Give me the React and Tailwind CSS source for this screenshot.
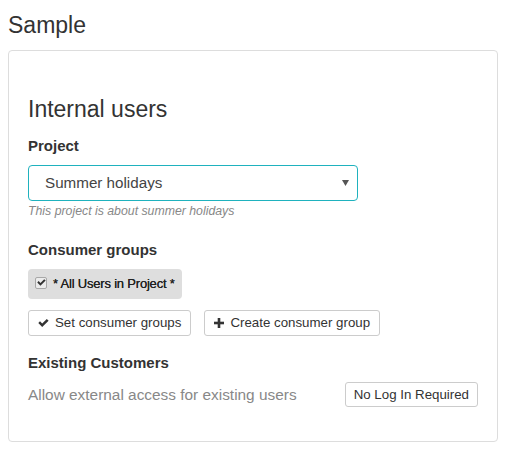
import React from 'react';

function CheckIcon() {
  return (
    <svg width="11" height="8" viewBox="0 0 11 8" className="shrink-0">
      <path d="M0.3 3.9 L2 2.3 L4.2 4.5 L8.8 0 L10.6 1.7 L4.2 8 Z" fill="#333" />
    </svg>
  );
}

function PlusIcon() {
  return (
    <svg width="10" height="10" viewBox="0 0 10 10" className="shrink-0">
      <rect x="3.7" y="0" width="2.6" height="10" fill="#333" />
      <rect x="0" y="3.7" width="10" height="2.6" fill="#333" />
    </svg>
  );
}

function Btn({ icon, children }) {
  return (
    <button className="flex items-center gap-[6px] h-[26px] pl-[9px] pr-[9px] bg-white border border-[#ccc] rounded-[3px] text-[13.3px] text-[#333] leading-none">
      {icon}
      <span>{children}</span>
    </button>
  );
}

export default function App() {
  return (
    <div className="w-[517px] h-[450px] bg-white px-[8px] text-[#333]" style={{ fontFamily: '"Liberation Sans", Arial, sans-serif' }}>
      {/* Page title */}
      <h1 className="pt-[12px] text-[23px] leading-[26px] font-normal">Sample</h1>

      {/* Panel */}
      <div className="mt-[12px] w-[490px] border border-[#ddd] rounded-[4px] px-[19px] pt-[45px] pb-[34px]">
        <h2 className="text-[23px] leading-[26px] font-normal">Internal users</h2>

        <div className="mt-[15px] text-[15px] leading-[18px] font-bold">Project</div>
        <div className="mt-[10px] relative w-[330px] h-[36px] border border-[#1fb2be] rounded-[4px] flex items-center pl-[16px]">
          <span className="text-[15.2px] text-[#444]">Summer holidays</span>
          <svg width="7" height="6" viewBox="0 0 7 6" className="absolute right-[8px] top-[14px]">
            <path d="M0 0 H7 L3.5 6 Z" fill="#555" />
          </svg>
        </div>
        <div className="mt-[3px] text-[12.3px] leading-[15px] italic text-[#888]">This project is about summer holidays</div>

        <div className="mt-[22px] text-[15px] leading-[18px] font-bold">Consumer groups</div>
        <div className="mt-[10px] inline-flex items-center h-[30px] bg-[#dedede] rounded-[4px] pl-[7px] pr-[7px]">
          <span className="w-[12px] h-[12px] rounded-[2px] border border-[#a8a8a8] bg-[#ececec] flex items-center justify-center mb-[3px]">
            <svg width="9" height="7" viewBox="0 0 11 8">
              <path d="M0.3 3.9 L2 2.3 L4.2 4.5 L8.8 0 L10.6 1.7 L4.2 8 Z" fill="#333" />
            </svg>
          </span>
          <span className="ml-[6px] text-[13px] text-[#222] tracking-[-0.2px] [text-shadow:0_0_0.4px_#222]">* All Users in Project *</span>
        </div>

        <div className="mt-[11px] flex gap-[13px]">
          <Btn icon={<CheckIcon />}>Set consumer groups</Btn>
          <Btn icon={<PlusIcon />}>Create consumer group</Btn>
        </div>

        <div className="mt-[18px] text-[15px] leading-[18px] font-bold">Existing Customers</div>
        <div className="mt-[10px] flex items-center justify-between h-[25px]">
          <span className="text-[15.4px] leading-[18px] text-[#888]">Allow external access for existing users</span>
          <button className="h-[25px] px-[8px] bg-white border border-[#ccc] rounded-[3px] text-[13.3px] text-[#333] leading-none">No Log In Required</button>
        </div>
      </div>
    </div>
  );
}
